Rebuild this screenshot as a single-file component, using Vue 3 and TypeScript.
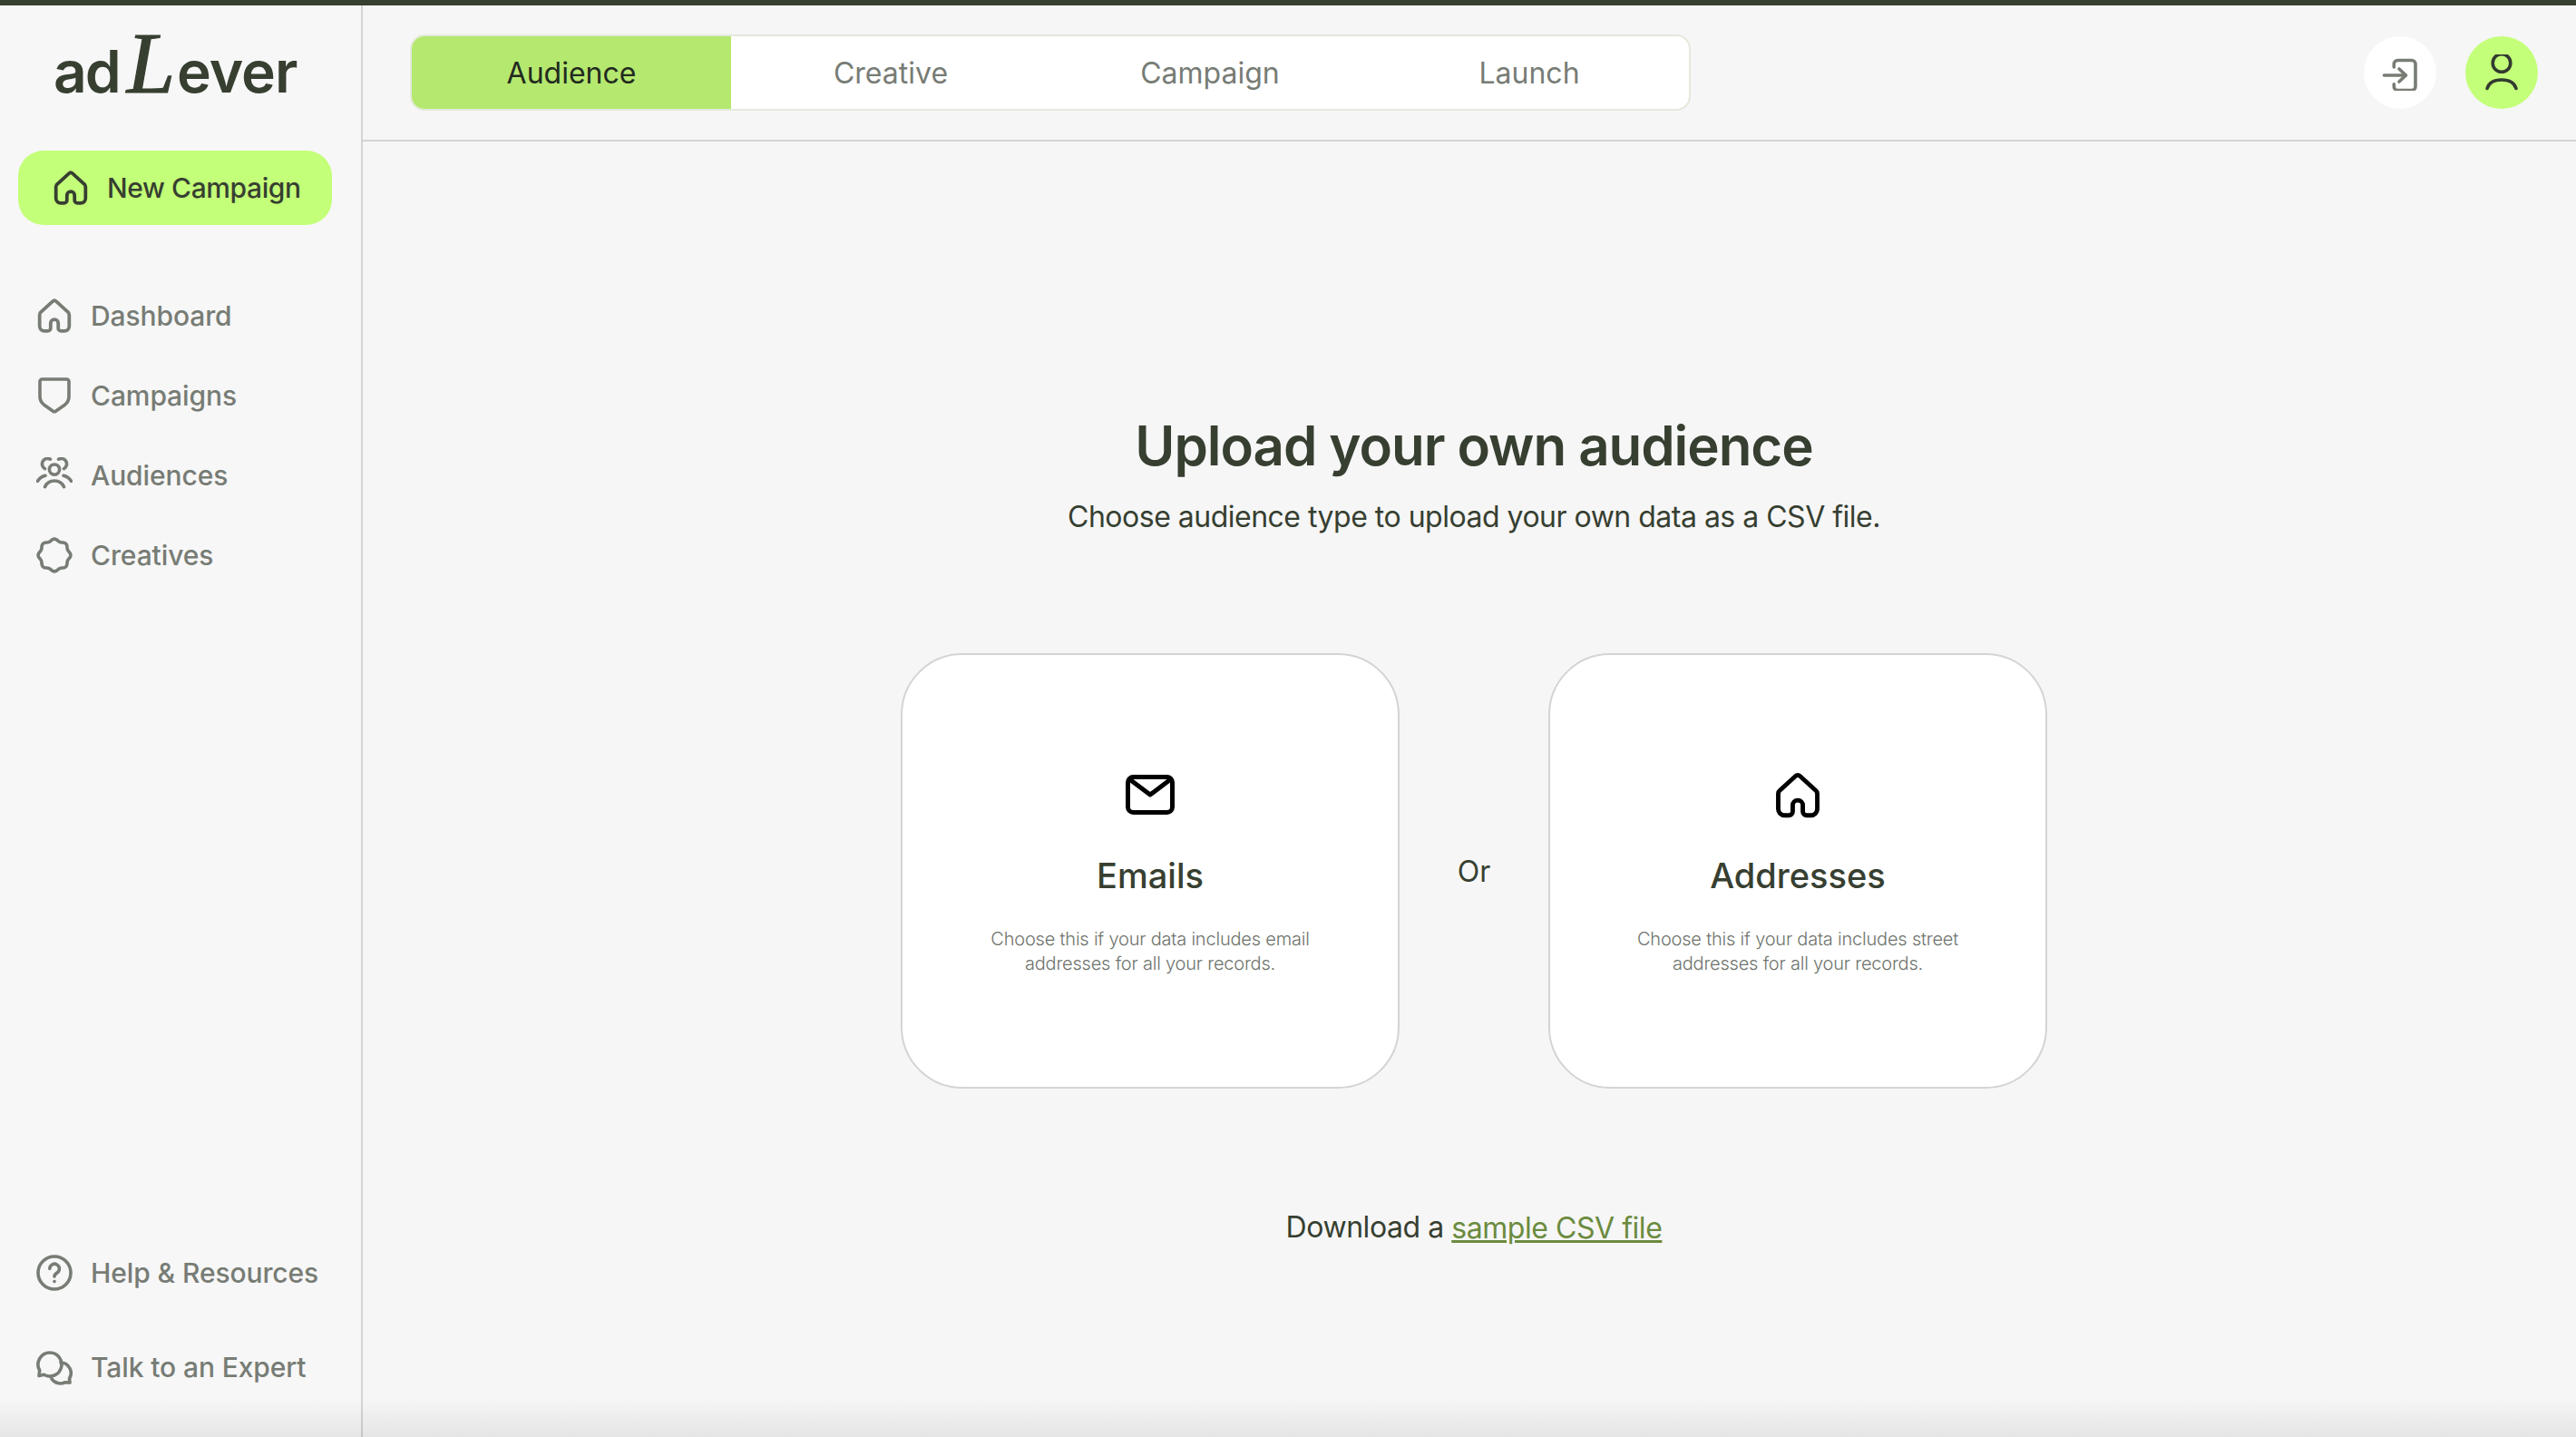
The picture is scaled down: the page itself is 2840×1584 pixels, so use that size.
<template>
  <div class="app-shell">
    <div class="top-strip"></div>
    <div class="app-body">
      <!-- Sidebar -->
      <aside class="sidebar">
        <div class="logo"><span class="logo-ad">ad</span><span class="logo-l">L</span><span class="logo-rest">ever</span></div>

        <button class="new-campaign" type="button">
          <svg class="icon" viewBox="-1 -1 38 38" fill="none"><path :d="homePath" /></svg>
          New Campaign
        </button>

        <nav class="nav">
          <a v-for="item in mainNav" :key="item.label" class="nav-item" href="#">
            <svg class="icon" :viewBox="item.box || '0 0 40 40'" fill="none">
              <path v-for="d in item.paths" :key="d" :d="d" />
            </svg>
            <span>{{ item.label }}</span>
          </a>
        </nav>

        <nav class="nav nav-bottom">
          <a v-for="item in bottomNav" :key="item.label" class="nav-item" href="#">
            <svg class="icon" viewBox="0 0 40 40" fill="none">
              <path v-for="d in item.paths" :key="d" :d="d" />
            </svg>
            <span>{{ item.label }}</span>
          </a>
        </nav>
      </aside>

      <div class="main-column">
        <!-- Header with steps -->
        <header class="topbar">
          <div class="steps">
            <button
              v-for="step in steps"
              :key="step"
              type="button"
              class="step"
              :class="{ active: step === currentStep }"
            >
              {{ step }}
            </button>
          </div>
          <div class="topbar-actions">
            <button class="round-btn exit" type="button" aria-label="Sign out">
              <svg class="icon" viewBox="0 -2 40 40" fill="none">
                <path d="M13.3 12V8.5a4 4 0 0 1 4-4H33a4 4 0 0 1 4 4v25a4 4 0 0 1-4 4H17.3a4 4 0 0 1-4-4v-2.8" />
                <path d="M2.5 21H26" />
                <path d="M19 14l7.5 7-7.5 7" />
              </svg>
            </button>
            <button class="round-btn user" type="button" aria-label="Account">
              <svg class="icon" viewBox="0 0 40 40" fill="none">
                <circle cx="20" cy="9.5" r="9.8" />
                <path d="M4 37.5C6 31 12 28 20 28s14 3 16 9.5" />
              </svg>
            </button>
          </div>
        </header>

        <!-- Content -->
        <main class="content">
          <h1 class="title">Upload your own audience</h1>
          <p class="subtitle">Choose audience type to upload your own data as a CSV file.</p>

          <div class="choices">
            <button class="choice" type="button">
              <span class="choice-icon">
                <svg width="54" height="44" viewBox="0 0 54 44" fill="none">
                  <rect x="2.5" y="2.5" width="49" height="39" rx="6" />
                  <path d="M7 7l20 15L47 7" />
                </svg>
              </span>
              <span class="choice-title">Emails</span>
              <span class="choice-text">Choose this if your data includes email addresses for all your records.</span>
            </button>

            <span class="or">Or</span>

            <button class="choice" type="button">
              <span class="choice-icon">
                <svg width="50" height="51" viewBox="0 0 36 36" fill="none"><path :d="homePath" /></svg>
              </span>
              <span class="choice-title">Addresses</span>
              <span class="choice-text">Choose this if your data includes street addresses for all your records.</span>
            </button>
          </div>

          <p class="download">Download a <a href="#" class="download-link">sample CSV file</a></p>
        </main>
      </div>
    </div>
    <div class="bottom-fade"></div>
  </div>
</template>

<script setup lang="ts">
import { ref } from 'vue'

interface NavItem {
  label: string
  paths: string[]
  box?: string
}

const homePath =
  'M16.2 2.9a2.6 2.6 0 0 1 3.6 0L32 14a4 4 0 0 1 1.5 3v12a5 5 0 0 1-5 5H25a3 3 0 0 1-3-3v-5a4 4 0 0 0-8 0v5a3 3 0 0 1-3 3H7.5a5 5 0 0 1-5-5V17A4 4 0 0 1 4 14z'

// wavy badge outline for the Creatives icon
const badgePath = (): string => {
  const points: string[] = []
  for (let i = 0; i < 96; i++) {
    const a = (i / 96) * Math.PI * 2 - Math.PI / 2
    const r = 16.8 + 1.1 * Math.cos(8 * (a + Math.PI / 2))
    points.push(`${(20 + r * Math.cos(a)).toFixed(2)} ${(20 + r * Math.sin(a)).toFixed(2)}`)
  }
  return `M${points.join('L')}z`
}

const mainNav: NavItem[] = [
  { label: 'Dashboard', paths: [homePath], box: '-1 -1 38 38' },
  {
    label: 'Campaigns',
    box: '-2 0 40 40',
    paths: ['M4.5 2h27A2.5 2.5 0 0 1 34 4.500V21c0 4-1.700 7-4.500 9.200L19.500 37.200a2.600 2.600 0 0 1-3 0L6.500 30.200C3.700 28 2 25 2 21V4.500A2.500 2.500 0 0 1 4.500 2z']
  },
  {
    label: 'Audiences',
    paths: [
      'M20 8a5.600 5.600 0 1 0 0 11.200A5.600 5.600 0 0 0 20 8z',
      'M15.500 2.200a6 6 0 0 0-6 10.500',
      'M24.500 2.200a6 6 0 0 1 6 10.500',
      'M1.500 26.300c2-3 5-5.300 8.500-6',
      'M38.500 26.300c-2-3-5-5.300-8.500-6',
      'M9.500 32.700c2-4.500 6-6.700 10.500-6.700s8.500 2.200 10.500 6.700'
    ]
  },
  { label: 'Creatives', paths: [badgePath()] }
]

const bottomNav: NavItem[] = [
  {
    label: 'Help & Resources',
    paths: [
      'M20 2a18 18 0 1 0 0 36 18 18 0 0 0 0-36z',
      'M14.800 15.500a5.300 5.300 0 1 1 8 4.600c-1.700 1-2.800 2-2.800 4',
      'M20 29.500v.1'
    ]
  },
  {
    label: 'Talk to an Expert',
    paths: [
      'M15 4a13 13 0 1 1-6.500 24.300L3 29.500l.7-6A13 13 0 0 1 15 4z',
      'M27 15a11.500 11.500 0 0 1 9.500 17.500L37 37l-5.500-.2A11.500 11.500 0 0 1 17 33'
    ]
  }
]

const steps = ['Audience', 'Creative', 'Campaign', 'Launch']
const currentStep = ref('Audience')
</script>

<style>
html,
body {
  margin: 0;
  background: #f6f6f6;
}
</style>

<style scoped>
.app-shell {
  position: relative;
  display: flex;
  flex-direction: column;
  height: 100vh;
  overflow: hidden;
  background: #f6f6f6;
  color: #373f31;
  font-family: Inter, "Liberation Sans", sans-serif;
}

.top-strip {
  flex: none;
  height: 6px;
  background: #373f31;
}

.app-body {
  flex: 1;
  display: flex;
  min-height: 0;
}

.bottom-fade {
  position: absolute;
  left: 0;
  right: 0;
  bottom: 0;
  height: 44px;
  background: linear-gradient(to bottom, rgba(0, 0, 0, 0), rgba(0, 0, 0, 0.07));
  pointer-events: none;
}

.icon {
  flex: none;
  width: 40px;
  height: 40px;
  stroke: currentColor;
  stroke-width: 3.6;
  stroke-linecap: round;
  stroke-linejoin: round;
}

/* Sidebar */
.sidebar {
  flex: none;
  box-sizing: border-box;
  width: 400px;
  display: flex;
  flex-direction: column;
  padding-bottom: 33px;
  background: #f7f7f7;
  border-right: 2px solid #d4d4d4;
}

.logo {
  box-sizing: border-box;
  height: 160px;
  padding-top: 16px;
  padding-left: 59px;
  display: flex;
  align-items: baseline;
  font-size: 64px;
  font-weight: 600;
  color: #373f31;
  line-height: 1;
}

.logo-ad {
  letter-spacing: -2px;
}

.logo-l {
  font-family: "Liberation Serif", serif;
  font-style: italic;
  font-weight: 400;
  font-size: 96px;
  margin: 0 2px 0 8px;
  -webkit-text-stroke: 1.2px #373f31;
}

.logo-rest {
  letter-spacing: -1px;
}

.new-campaign {
  box-sizing: border-box;
  display: flex;
  align-items: center;
  gap: 20px;
  width: 346px;
  height: 82px;
  margin-left: 20px;
  padding: 0 0 0 38px;
  border: none;
  border-radius: 28px;
  background: #c3ff78;
  color: #373f31;
  font-family: inherit;
  font-size: 30px;
  font-weight: 500;
  letter-spacing: -0.4px;
}

.nav {
  display: flex;
  flex-direction: column;
  margin-top: 56px;
}

.nav-bottom {
  margin-top: auto;
  gap: 16px;
}

.nav-item {
  display: flex;
  align-items: center;
  gap: 20px;
  height: 88px;
  padding-left: 40px;
  color: #777c75;
  font-size: 30px;
  font-weight: 500;
  letter-spacing: -0.1px;
  text-decoration: none;
}

/* Header */
.main-column {
  flex: 1;
  min-width: 0;
  display: flex;
  flex-direction: column;
}

.topbar {
  flex: none;
  box-sizing: border-box;
  height: 150px;
  display: flex;
  align-items: center;
  justify-content: space-between;
  padding: 0 42px 0 52px;
  border-bottom: 2px solid #d4d4d4;
}

.steps {
  display: grid;
  grid-template-columns: repeat(4, 1fr);
  box-sizing: border-box;
  width: 1412px;
  height: 84px;
  border: 2px solid #e3e9da;
  border-radius: 16px;
  background: #ffffff;
  overflow: hidden;
}

.step {
  border: none;
  background: transparent;
  color: #777c75;
  font-family: inherit;
  font-size: 32px;
  font-weight: 400;
}

.step.active {
  background: #b5e86f;
  color: #222a1e;
}

.topbar-actions {
  display: flex;
  gap: 32px;
}

.round-btn {
  display: flex;
  align-items: center;
  justify-content: center;
  width: 80px;
  height: 80px;
  padding: 0;
  border: none;
  border-radius: 50%;
}

.round-btn.exit {
  background: #ffffff;
  color: #777c75;
}

.round-btn.user {
  background: #c3ff78;
  color: #333a30;
}

/* Content */
.content {
  flex: 1;
  display: flex;
  flex-direction: column;
  align-items: center;
  padding: 299px 0 0 10px;
}

.title {
  margin: 0;
  font-size: 60px;
  line-height: 72px;
  font-weight: 600;
  letter-spacing: -1.05px;
  color: #373f31;
}

.subtitle {
  margin: 23px 0 0;
  font-size: 32px;
  line-height: 40px;
  letter-spacing: -0.5px;
  color: #373f31;
}

.choices {
  display: flex;
  align-items: center;
  gap: 62px;
  margin-top: 130px;
}

.choice {
  box-sizing: border-box;
  width: 550px;
  height: 480px;
  display: flex;
  flex-direction: column;
  align-items: center;
  padding: 129px 70px 0;
  border: 2px solid #d4d4d4;
  border-radius: 68px;
  background: #ffffff;
  font-family: inherit;
}

.choice-icon {
  display: flex;
  align-items: center;
  justify-content: center;
  height: 50px;
}

.choice-icon svg {
  stroke: #000000;
  stroke-width: 5;
  stroke-linecap: round;
  stroke-linejoin: round;
}

.choice-icon svg[viewBox="0 0 36 36"] {
  stroke-width: 3.5;
}

.choice-title {
  margin-top: 41px;
  font-size: 38px;
  line-height: 46px;
  font-weight: 500;
  color: #373f31;
}

.choice-text {
  margin-top: 34px;
  font-size: 20px;
  font-weight: 300;
  line-height: 27px;
  letter-spacing: -0.2px;
  color: #6f746d;
  text-align: center;
}

.or {
  width: 40px;
  text-align: center;
  font-size: 32px;
  color: #373f31;
}

.download {
  margin: 133px 0 0;
  font-size: 32px;
  line-height: 40px;
  letter-spacing: -0.45px;
  color: #373f31;
}

.download-link {
  color: #6b8b3e;
  position: relative;
  top: 1px;
}
</style>
